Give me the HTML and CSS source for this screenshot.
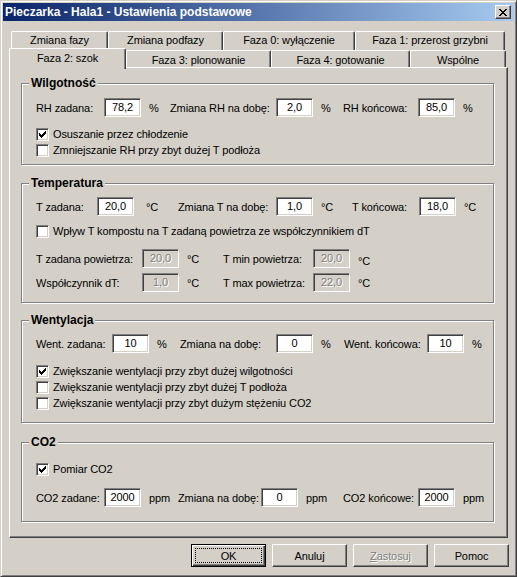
FILE: index.html
```html
<!DOCTYPE html>
<html lang="pl">
<head>
  <meta charset="UTF-8">
  <title>Pieczarka - Hala1 - Ustawienia podstawowe</title>
  <link rel="stylesheet" href="styles.css">
</head>
<body>
  <div class="window">
    <div class="titlebar">
      <span class="title">Pieczarka - Hala1 - Ustawienia podstawowe</span>
      <span class="close">
        <svg width="8" height="7" viewBox="0 0 8 7"><path d="M0 0h2v1H0zM6 0h2v1H6zM1 1h2v1H1zM5 1h2v1H5zM2 2h4v1H2zM3 3h2v1H3zM2 4h4v1H2zM1 5h2v1H1zM5 5h2v1H5zM0 6h2v1H0zM6 6h2v1H6z" fill="#000"/></svg>
      </span>
    </div>

    <div class="tabs">
      <div class="tabrow back">
        <div class="tab">Zmiana fazy</div>
        <div class="tab">Zmiana podfazy</div>
        <div class="tab">Faza 0: wyłączenie</div>
        <div class="tab">Faza 1: przerost grzybni</div>
      </div>
      <div class="tabrow front">
        <div class="tab active">Faza 2: szok</div>
        <div class="tab">Faza 3: plonowanie</div>
        <div class="tab">Faza 4: gotowanie</div>
        <div class="tab">Wspólne</div>
      </div>
    </div>

    <div class="panel">
      <!-- Wilgotnosc -->
      <div class="group g-rh">
        <span class="caption">Wilgotność</span>
        <div class="row r-rh">
          <span>RH zadana:</span><span class="edit">78,2</span><span class="unit">%</span>
          <span>Zmiana RH na dobę:</span><span class="edit">2,0</span><span class="unit">%</span>
          <span>RH końcowa:</span><span class="edit">85,0</span><span class="unit">%</span>
        </div>
        <div class="check first"><span class="box"><svg width="7" height="7" viewBox="0 0 7 7"><path d="M6 0h1v1H6zM5 1h2v1H5zM0 2h1v1H0zM4 2h3v1H4zM0 3h2v1H0zM3 3h3v1H3zM0 4h5v1H0zM1 5h3v1H1zM2 6h1v1H2z" fill="#000"/></svg></span>Osuszanie przez chłodzenie</div>
        <div class="check"><span class="box"></span>Zmniejszanie RH przy zbyt dużej T podłoża</div>
      </div>

      <!-- Temperatura -->
      <div class="group g-t">
        <span class="caption">Temperatura</span>
        <div class="row r-t">
          <span>T zadana:</span><span class="edit">20,0</span><span class="unit wide">°C</span>
          <span>Zmiana T na dobę:</span><span class="edit">1,0</span><span class="unit">°C</span>
          <span>T końcowa:</span><span class="edit">18,0</span><span class="unit">°C</span>
        </div>
        <div class="check mid"><span class="box"></span>Wpływ T kompostu na T zadaną powietrza ze współczynnikiem dT</div>
        <div class="row r-tp first-sub">
          <span>T zadana powietrza:</span><span class="edit off">20,0</span><span class="unit">°C</span>
          <span>T min powietrza:</span><span class="edit off">20,0</span><span class="unit low">°C</span>
        </div>
        <div class="row r-tp second-sub">
          <span>Współczynnik dT:</span><span class="edit off">1,0</span><span class="unit">°C</span>
          <span>T max powietrza:</span><span class="edit off">22,0</span><span class="unit">°C</span>
        </div>
      </div>

      <!-- Wentylacja -->
      <div class="group g-w">
        <span class="caption">Wentylacja</span>
        <div class="row r-w">
          <span>Went. zadana:</span><span class="edit">10</span><span class="unit">%</span>
          <span>Zmiana na dobę:</span><span class="edit">0</span><span class="unit">%</span>
          <span>Went. końcowa:</span><span class="edit">10</span><span class="unit">%</span>
        </div>
        <div class="check wfirst"><span class="box"><svg width="7" height="7" viewBox="0 0 7 7"><path d="M6 0h1v1H6zM5 1h2v1H5zM0 2h1v1H0zM4 2h3v1H4zM0 3h2v1H0zM3 3h3v1H3zM0 4h5v1H0zM1 5h3v1H1zM2 6h1v1H2z" fill="#000"/></svg></span>Zwiększanie wentylacji przy zbyt dużej wilgotności</div>
        <div class="check"><span class="box"></span>Zwiększanie wentylacji przy zbyt dużej T podłoża</div>
        <div class="check"><span class="box"></span>Zwiększanie wentylacji przy zbyt dużym stężeniu CO2</div>
      </div>

      <!-- CO2 -->
      <div class="group g-co2">
        <span class="caption">CO2</span>
        <div class="check"><span class="box"><svg width="7" height="7" viewBox="0 0 7 7"><path d="M6 0h1v1H6zM5 1h2v1H5zM0 2h1v1H0zM4 2h3v1H4zM0 3h2v1H0zM3 3h3v1H3zM0 4h5v1H0zM1 5h3v1H1zM2 6h1v1H2z" fill="#000"/></svg></span>Pomiar CO2</div>
        <div class="row r-co2">
          <span>CO2 zadane:</span><span class="edit">2000</span><span class="unit">ppm</span>
          <span>Zmiana na dobę:</span><span class="edit">0</span><span class="unit">ppm</span>
          <span>CO2 końcowe:</span><span class="edit">2000</span><span class="unit">ppm</span>
        </div>
      </div>
    </div>

    <div class="buttons">
      <div class="btn default"><span class="focus">OK</span></div>
      <div class="btn">Anuluj</div>
      <div class="btn disabled"><span><u>Z</u>astosuj</span></div>
      <div class="btn">Pomoc</div>
    </div>
  </div>
</body>
</html>
```

FILE: styles.css
```css
body {
  margin: 0;
  background: #d4d0c8;
  font-family: "Liberation Sans", Arial, sans-serif;
  font-size: 11px;
  letter-spacing: -0.1px;
  color: #000;
}

/* okno */
.window {
  width: 517px;
  height: 577px;
  box-sizing: border-box;
  padding: 2px;
  background: #d4d0c8;
  border: 1px solid;
  border-color: #d4d0c8 #404040 #404040 #d4d0c8;
  box-shadow: inset 1px 1px 0 #fff, inset -1px -1px 0 #808080;
}

.titlebar {
  height: 18px;
  display: flex;
  align-items: center;
  justify-content: space-between;
  background: linear-gradient(to right, #0a246a, #a6caf0);
  padding: 0 3px 0 2px;
}

.title {
  color: #fff;
  font-weight: bold;
  font-size: 12px;
  letter-spacing: 0;
}

.close {
  width: 16px;
  height: 14px;
  box-sizing: border-box;
  display: flex;
  align-items: center;
  justify-content: center;
  background: #d4d0c8;
  border: 1px solid;
  border-color: #fff #404040 #404040 #fff;
  box-shadow: inset -1px -1px 0 #808080;
}

/* zakladki */
.tabs {
  margin: 10px 0 0 6px;
}

.tabrow {
  display: grid;
}

.tabrow.back {
  height: 19px;
  margin-left: 2px;
  grid-template-columns: 97px 115px 132px 150px;
}

.tabrow.front {
  height: 17px;
  grid-template-columns: 117px 145px 139px 96px;
}

.tab {
  box-sizing: border-box;
  height: 19px;
  display: flex;
  align-items: center;
  justify-content: center;
  background: #d4d0c8;
  border-top: 1px solid #fff;
  border-left: 1px solid #fff;
  border-right: 1px solid #404040;
  border-radius: 2px 2px 0 0;
  box-shadow: inset -1px 0 0 #808080;
  padding-bottom: 2px;
}

.front .tab {
  height: 17px;
  padding: 2px 0 0;
}

.front .tab.active {
  position: relative;
  z-index: 1;
  height: 21px;
  margin-top: -2px;
  padding: 0 0 2px;
}

/* panel */
.panel {
  width: 499px;
  height: 471px;
  box-sizing: border-box;
  margin-left: 6px;
  border: 1px solid;
  border-color: #fff #404040 #404040 #fff;
  box-shadow: inset -1px -1px 0 #808080;
  padding-top: 15px;
}

.group {
  position: relative;
  box-sizing: border-box;
  width: 473px;
  margin-left: 11px;
  border: 1px solid #808080;
  box-shadow: inset 1px 1px 0 #fff, 1px 1px 0 #fff;
  padding-left: 14px;
}

.caption {
  position: absolute;
  top: -8px;
  left: 7px;
  padding: 0 2px 0 2px;
  background: #d4d0c8;
  font-weight: bold;
  font-size: 12px;
  letter-spacing: 0;
  line-height: 14px;
}

.g-rh { height: 82px; padding-top: 14px; }
.g-t { height: 120px; margin-top: 18px; padding-top: 13px; }
.g-w { height: 103px; margin-top: 17px; padding-top: 13px; }
.g-co2 { height: 80px; margin-top: 19px; padding-top: 19px; }

.row {
  display: grid;
  align-items: center;
  height: 19px;
}

.r-rh { grid-template-columns: 68px 37px 29px 106px 37px 30px 75px 37px auto; }
.r-t { grid-template-columns: 61px 37px 44px 98px 37px 39px 67px 37px auto; }
.r-tp { grid-template-columns: 106px 37px 44px 90px 37px auto; }
.r-w { grid-template-columns: 76px 37px 31px 96px 37px 31px 83px 37px auto; }
.r-co2 { grid-template-columns: 68px 37px 37px 83px 37px 45px 75px 37px auto; }

.first-sub { margin-top: 9px; }
.second-sub { margin-top: 5px; }
.r-co2 { margin-top: 10px; }

.unit {
  padding-left: 8px;
}

.unit.wide {
  padding-left: 12px;
}

.unit.low {
  padding-top: 5px;
}

.edit {
  box-sizing: border-box;
  height: 19px;
  line-height: 17px;
  text-align: center;
  background: #fff;
  border: 1px solid;
  border-color: #808080 #fff #fff #808080;
  box-shadow: inset 1px 1px 0 #404040, inset -1px -1px 0 #d4d0c8;
}

.edit.off {
  background: #d4d0c8;
  color: #808080;
  text-shadow: 1px 1px 0 #fff;
}

/* pola wyboru */
.check {
  display: flex;
  align-items: flex-start;
  height: 16px;
  line-height: 15px;
}

.check.first { margin-top: 10px; }
.check.mid { margin-top: 8px; }
.check.wfirst { margin-top: 11px; }

.box {
  box-sizing: border-box;
  width: 13px;
  height: 13px;
  margin: 1px 4px 0 0;
  display: flex;
  align-items: center;
  justify-content: center;
  background: #fff;
  border: 1px solid;
  border-color: #808080 #fff #fff #808080;
  box-shadow: inset 1px 1px 0 #404040, inset -1px -1px 0 #d4d0c8;
}

/* przyciski */
.buttons {
  display: flex;
  justify-content: flex-end;
  gap: 6px;
  margin: 6px 5px 0 0;
}

.btn {
  box-sizing: border-box;
  width: 75px;
  height: 23px;
  display: flex;
  align-items: center;
  justify-content: center;
  border: 1px solid;
  border-color: #fff #404040 #404040 #fff;
  box-shadow: inset -1px -1px 0 #808080;
}

.btn.default {
  border-color: #000;
  box-shadow: inset 1px 1px 0 #fff, inset -1px -1px 0 #404040, inset -2px -2px 0 #808080;
  align-items: stretch;
  padding: 3px;
}

.focus {
  flex: 1;
  display: flex;
  align-items: center;
  justify-content: center;
  border: 1px dotted #000;
}

.btn.disabled {
  color: #808080;
  text-shadow: 1px 1px 0 #fff;
}
```
